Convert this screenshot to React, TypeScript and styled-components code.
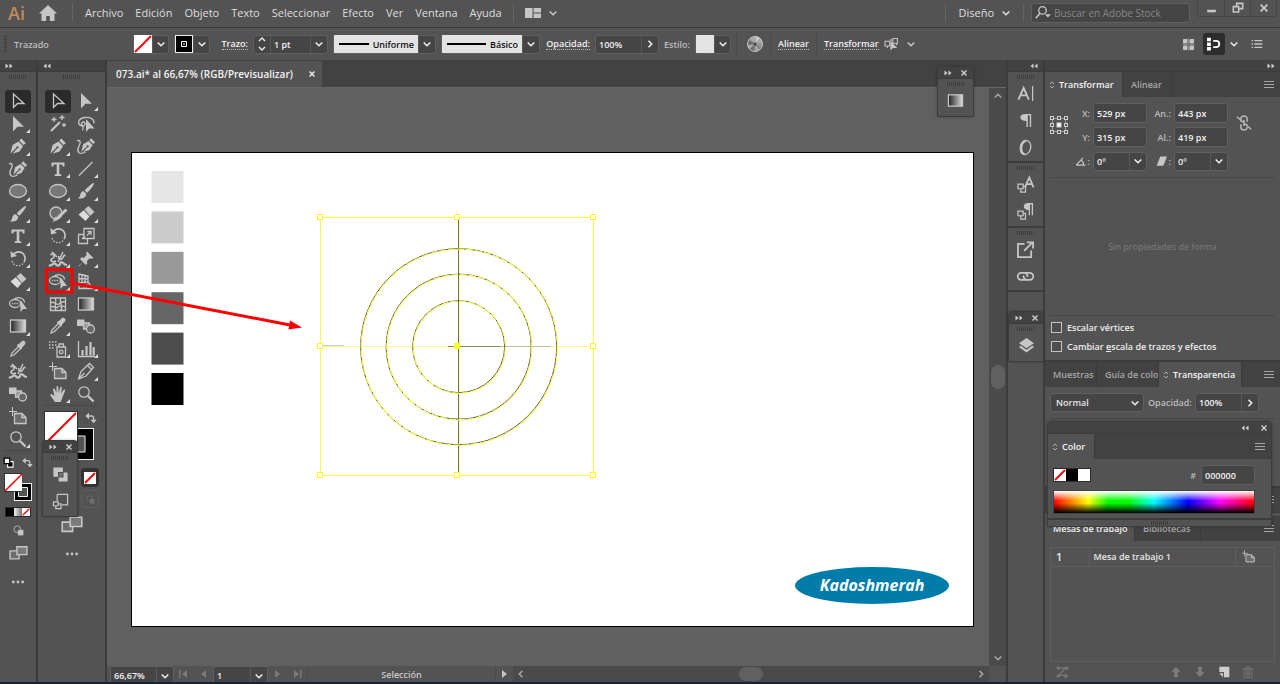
import React from 'react';
import styled, { createGlobalStyle, css } from 'styled-components';

const c = {
  bar: '#535353',
  dark: '#424242',
  line: '#3c3c3c',
  canvas: '#606060',
  field: '#454545',
  edge: '#606060',
  icon: '#c6c6c6',
  text: '#e6e6e6',
  dim: '#a6a6a6',
  off: '#7a7a7a',
};

const Global = createGlobalStyle`
  * { box-sizing: border-box; }
  body { margin: 0; background: ${c.bar}; }
  body, button, input, select, table {
    font-family: "Open Sans", "Noto Sans", sans-serif;
    font-size: 9px;
    color: ${c.text};
  }
  button { background: none; border: 0; padding: 0; cursor: default; }
  svg { display: block; flex: none; overflow: visible; }
`;

/* ---------- shell ---------- */

const Shell = styled.div`
  position: relative;
  display: flex;
  flex-direction: column;
  height: 100vh;
  overflow: hidden;
  background: ${c.bar};
`;

const Workspace = styled.div`
  flex: 1;
  min-height: 0;
  display: flex;
  background: ${c.line};
  gap: 2px;
`;

const Taskbar = styled.div`
  height: 2px;
  background: #14243a;
`;

/* ---------- menu bar ---------- */

const MenuBar = styled.header`
  display: flex;
  align-items: center;
  height: 28px;
  padding: 0 3px 2px 8px;
  border-bottom: 1px solid ${c.line};
  flex: none;
`;

const Brand = styled.span`
  width: 31px;
  font-size: 18px;
  line-height: 24px;
  font-weight: 600;
  color: #c5875f;
`;

const Divider = styled.span<{ $tall?: boolean }>`
  width: 1px;
  height: ${p => (p.$tall ? 24 : 18)}px;
  background: ${p => (p.$tall ? '#494949' : '#646464')};
  flex: none;
`;

const Menu = styled.nav`
  display: flex;
  gap: 12px;
  padding: 0 11px 0 15px;
`;

const MenuItem = styled.button`
  font-size: 11px;
  line-height: 20px;
  color: #dedede;
`;

const IconButton = styled.button<{ $w?: number; $h?: number; $on?: boolean }>`
  display: flex;
  align-items: center;
  justify-content: center;
  gap: 8px;
  width: ${p => p.$w ?? 20}px;
  height: ${p => p.$h ?? 20}px;
  flex: none;
  border-radius: 3px;
  color: ${c.icon};
  background: ${p => (p.$on ? '#2d2d2d' : 'none')};
`;

const Spacer = styled.span`
  flex: 1;
`;

const WorkspaceSwitch = styled.button`
  display: flex;
  align-items: center;
  gap: 8px;
  padding: 0 13px 0 12px;
  font-size: 11px;
  color: #dedede;
`;

const Search = styled.label`
  display: flex;
  align-items: center;
  gap: 4px;
  width: 159px;
  height: 20px;
  margin: 0 7px;
  padding-left: 3px;
  background: ${c.field};
  border: 1px solid ${c.edge};
  border-radius: 3px;
  color: ${c.icon};
`;

const SearchInput = styled.input`
  flex: 1;
  min-width: 0;
  background: none;
  border: 0;
  padding: 0;
  font-size: 10px;
  &::placeholder { color: #858585; }
`;

const WindowButtons = styled.div`
  display: flex;
  align-self: flex-start;
  border: 1px solid #454545;
  border-top: 0;
  border-radius: 0 0 3px 3px;
  & > button + button { border-left: 1px solid #454545; border-radius: 0; }
`;

/* ---------- control bar ---------- */

const ControlBar = styled.div`
  display: flex;
  align-items: center;
  gap: 5px;
  height: 32px;
  padding: 0 9px 0 4px;
  flex: none;
`;

const Context = styled.span`
  width: 116px;
  padding-left: 2px;
  font-weight: 600;
  color: #bdbdbd;
`;

const Combo = styled.div<{ $w: number; $fill?: boolean }>`
  display: flex;
  align-items: center;
  width: ${p => p.$w}px;
  height: ${p => (p.$fill ? 20 : 19)}px;
  background: ${c.field};
  border: 1px solid ${c.edge};
  border-radius: 3px;
  flex: none;
`;

const ComboInput = styled.input`
  flex: 1;
  min-width: 0;
  height: 17px;
  padding: 0 3px;
  border: 0;
  background: none;
  font-weight: 600;
  color: #f2f2f2;
`;

const ComboEnd = styled.button<{ $left?: boolean }>`
  display: flex;
  align-items: center;
  justify-content: center;
  width: 17px;
  height: 17px;
  flex: none;
  color: #eee;
  ${p => (p.$left ? 'border-right' : 'border-left')}: 1px solid #585858;
`;

const Swatch = styled.span<{ $bg?: string }>`
  width: 18px;
  height: 18px;
  flex: none;
  background: ${p => p.$bg ?? '#fff'};
`;

const LineSample = styled.button`
  display: flex;
  align-items: center;
  justify-content: flex-end;
  gap: 4px;
  flex: 1;
  height: 18px;
  padding: 0 4px 0 5px;
  background: #e3e3e3;
  color: #111;
  font-weight: 600;
  &::before { content: ''; flex: 1; height: 2px; background: #000; }
`;

const LinkLabel = styled.button<{ $w?: number }>`
  width: ${p => (p.$w ? `${p.$w}px` : 'auto')};
  display: flex;
  justify-content: flex-end;
  flex: none;
  font-weight: 600;
  color: #f0f0f0;
  & > span { line-height: 11px; border-bottom: 1px dotted #bbb; }
`;

const Label = styled.label<{ $w?: number }>`
  width: ${p => (p.$w ? `${p.$w}px` : 'auto')};
  flex: none;
  text-align: right;
  white-space: nowrap;
  font-weight: 600;
  color: #bdbdbd;
`;

const ActionGroup = styled.div`
  display: flex;
  align-items: center;
  gap: 7px;
  padding-left: 5px;
`;

/* ---------- docks ---------- */

const Dock = styled.aside<{ $w: number }>`
  display: flex;
  flex-direction: column;
  width: ${p => p.$w}px;
  flex: none;
  background: ${c.bar};
`;

const DockHead = styled.div<{ $end?: boolean }>`
  display: flex;
  align-items: center;
  justify-content: ${p => (p.$end ? 'flex-end' : 'flex-start')};
  height: 12px;
  padding: 0 5px;
  flex: none;
  background: ${c.dark};
  border-bottom: 1px solid ${c.line};
  color: #d0d0d0;
`;

const Grip = styled.span<{ $side?: boolean }>`
  flex: none;
  ${p =>
    p.$side
      ? css`
          width: 3px;
          height: 18px;
          background: repeating-linear-gradient(#3e3e3e 0 1px, transparent 1px 2px);
        `
      : css`
          width: 18px;
          height: 4px;
          margin: 3px auto 1px;
          background: repeating-linear-gradient(90deg, #3e3e3e 0 1px, transparent 1px 2px);
        `}
`;

const ToolGrid = styled.div<{ $rows: number; $cols: number; $h: number }>`
  display: grid;
  grid-template-columns: repeat(${p => p.$cols}, 28px);
  grid-template-rows: repeat(${p => p.$rows}, 1fr);
  justify-content: center;
  height: ${p => p.$h}px;
  margin-top: 10px;
  flex: none;
`;

const Tool = styled.button<{ $on?: boolean; $more?: boolean }>`
  position: relative;
  display: flex;
  align-items: center;
  justify-content: center;
  margin: 0 1px;
  border-radius: 3px;
  color: ${c.icon};
  background: ${p => (p.$on ? '#2b2b2b' : 'none')};
  ${p =>
    p.$more &&
    css`
      &::after {
        content: '';
        position: absolute;
        right: 1px;
        bottom: 2px;
        border: 2px solid transparent;
        border-right-color: #ddd;
        border-bottom-color: #ddd;
      }
    `}
`;

const Rule = styled.hr`
  width: 100%;
  border: 0;
  border-top: 1px solid #484848;
  margin: 0;
  flex: none;
`;

const ToolFoot = styled.div`
  display: flex;
  flex-direction: column;
  align-items: center;
  padding: 0 4px;
  color: ${c.icon};
`;

const FootRow = styled.div<{ $h: number }>`
  display: flex;
  align-items: center;
  justify-content: space-between;
  padding: 0 1px;
  height: ${p => p.$h}px;
  gap: 8px;
`;

const WideFoot = styled.div`
  display: flex;
  flex-direction: column;
  padding: 0 6px;
`;

const WideSwatches = styled.div`
  position: relative;
  height: 58px;
  padding-top: 5px;
`;

const SwapButton = styled.button`
  position: absolute;
  top: 6px;
  right: 2px;
  color: ${c.icon};
`;

const SideModes = styled.div`
  display: flex;
  flex-direction: column;
  align-items: flex-end;
  gap: 3px;
  padding: 4px 0 0;
`;

const ModeButton = styled(IconButton)<{ $faint?: boolean }>`
  border: 1px solid ${p => (p.$faint ? '#5e5e5e' : '#333')};
  background: ${p => (p.$faint ? 'none' : '#333')};
  color: ${p => (p.$faint ? '#707070' : c.icon)};
`;

/* ---------- document ---------- */

const Doc = styled.main`
  display: flex;
  flex-direction: column;
  flex: 1;
  min-width: 0;
  background: ${c.dark};
`;

const DocTabs = styled.div`
  height: 28px;
  display: flex;
  padding-top: 1px;
  border-bottom: 1px solid #666;
  flex: none;
`;

const DocTab = styled.button`
  display: flex;
  align-items: center;
  gap: 16px;
  padding: 0 7px 0 9px;
  background: ${c.bar};
  font-size: 10px;
  font-weight: 600;
  color: #f2f2f2;
`;

const DocRow = styled.div`
  flex: 1;
  min-height: 0;
  display: flex;
`;

const Canvas = styled.div`
  flex: 1;
  min-width: 0;
  overflow: hidden;
  padding: 64px 0 0 24px;
  background: ${c.canvas};
`;

const Artboard = styled.div`
  position: relative;
  width: 843px;
  height: 475px;
  border: 1px solid #000;
  background: #fff;
`;

const Watermark = styled.div`
  position: absolute;
  right: 24px;
  bottom: 22px;
  width: 154px;
  height: 37px;
  border-radius: 50%;
  background: #007cab;
  color: #fff;
  font-size: 16px;
  line-height: 36px;
  font-weight: 700;
  font-style: italic;
  text-align: center;
`;

const VScroll = styled.div`
  display: flex;
  flex-direction: column;
  align-items: center;
  justify-content: space-between;
  width: 17px;
  padding: 4px 0;
  flex: none;
  background: #4a4a4a;
  color: ${c.dim};
`;

const Thumb = styled.span<{ $w: number; $h: number }>`
  width: ${p => p.$w}px;
  height: ${p => p.$h}px;
  border-radius: 8px;
  background: ${c.canvas};
`;

const StatusBar = styled.footer`
  display: flex;
  height: 16px;
  padding-left: 3px;
  flex: none;
  background: ${c.bar};
`;

const StatusField = styled.div<{ $w: number }>`
  display: flex;
  width: ${p => p.$w}px;
  background: ${c.field};
  border: 1px solid ${c.edge};
  border-bottom: 0;
`;

const StatusNav = styled.div`
  display: flex;
  align-items: center;
  justify-content: space-around;
  width: 39px;
  color: ${c.off};
`;

const StatusText = styled.div`
  width: 189px;
  border-left: 1px solid #494949;
  border-right: 1px solid #494949;
  text-align: center;
  line-height: 18px;
  font-weight: 600;
  color: #c8c8c8;
`;

const HScroll = styled.div`
  display: flex;
  align-items: center;
  justify-content: space-between;
  flex: 1;
  padding: 0 4px;
  margin-right: 17px;
  background: #4a4a4a;
  color: ${c.dim};
`;

/* ---------- panels ---------- */

const IconDock = styled.div`
  display: flex;
  flex-direction: column;
  width: 35px;
  flex: none;
  background: ${c.bar};
`;

const IconGroup = styled.div<{ $h: number }>`
  display: flex;
  flex-direction: column;
  align-items: center;
  height: ${p => p.$h}px;
  border-bottom: 2px solid ${c.line};
  color: ${c.icon};
`;

const Panels = styled.div`
  display: flex;
  flex-direction: column;
  width: 235px;
  flex: none;
  background: ${c.bar};
`;

const Tabs = styled.div`
  display: flex;
  align-items: stretch;
  height: 25px;
  flex: none;
  background: ${c.dark};
`;

const Tab = styled.button<{ $on?: boolean; $icon?: boolean; $w: number }>`
  display: flex;
  align-items: center;
  gap: 4px;
  width: ${p => p.$w}px;
  padding-left: ${p => (p.$icon ? 4 : 8)}px;
  overflow: hidden;
  white-space: nowrap;
  border-right: 1px solid ${c.line};
  background: ${p => (p.$on ? c.bar : 'none')};
  font-weight: 600;
  color: ${p => (p.$on ? '#f4f4f4' : c.dim)};
`;

const PanelMenu = styled.button`
  margin-left: auto;
  padding-right: 6px;
  color: ${c.dim};
`;

const TransformBody = styled.section`
  display: flex;
  flex-direction: column;
  height: 265px;
  padding: 6px 5px 0;
  border-bottom: 2px solid ${c.line};
  flex: none;
`;

const TransformFields = styled.div`
  display: flex;
  align-items: flex-start;
  height: 74px;
`;

const RefPoint = styled.button`
  margin-top: 13px;
`;

const FieldCols = styled.div`
  display: grid;
  grid-template-columns: 22px 54px 21px 54px;
  grid-auto-rows: 20px;
  gap: 4px 3px;
  align-items: center;
`;

const FieldTail = styled.div`
  display: flex;
  justify-content: flex-end;
  align-items: center;
  gap: 2px;
  color: ${c.icon};
`;

const LinkButton = styled.button`
  margin: 12px 0 0 8px;
  color: #b8b8b8;
`;

const Empty = styled.p`
  margin: 0;
  height: 137px;
  line-height: 138px;
  text-align: center;
  color: #7c7c7c;
`;

const Check = styled.label`
  display: flex;
  align-items: center;
  gap: 5px;
  height: 19px;
  font-weight: 600;
  color: #ececec;
`;

const CheckBox = styled.input`
  appearance: none;
  width: 11px;
  height: 11px;
  margin: 0;
  border: 1px solid #c4c4c4;
  background: #4d4d4d;
`;

const Checks = styled.div`
  padding: 2px 0 0 1px;
`;

const TransparencyBody = styled.section`
  height: 101px;
  padding: 6px 5px 0;
  border-bottom: 2px solid ${c.line};
  flex: none;
`;

const BlendRow = styled.div`
  display: flex;
  align-items: center;
  gap: 4px;
  height: 25px;
  padding-bottom: 6px;
`;

const BlendBox = styled.div`
  position: relative;
  width: 94px;
  color: #eee;
  & > svg { position: absolute; right: 5px; top: 6px; pointer-events: none; }
`;

const BlendSelect = styled.select`
  appearance: none;
  width: 100%;
  height: 19px;
  padding: 0 5px;
  border: 1px solid ${c.edge};
  border-radius: 3px;
  background: ${c.field};
  font-weight: 600;
`;

const CollapsedTabs = styled(Tabs)`
  margin-bottom: 3px;
  border-bottom: 1px solid ${c.line};
`;

const BoardsBody = styled.section`
  flex: 1;
  min-height: 0;
  display: flex;
  flex-direction: column;
  padding: 6px 5px 0;
`;

const BoardFrame = styled.div`
  flex: 1;
  border: 1px solid #5e5e5e;
`;

const BoardTable = styled.table`
  width: 100%;
  border-collapse: collapse;
  table-layout: fixed;
  td {
    height: 18px;
    padding: 0 4px;
    border-bottom: 1px solid #5e5e5e;
    font-weight: 600;
  }
  td + td { border-left: 1px solid #5e5e5e; }
  td:first-child { width: 38px; padding-left: 5px; font-size: 11px; line-height: 16px; }
  td:last-child { width: 39px; padding-left: 6px; color: ${c.icon}; }
`;

const BoardTools = styled.div`
  display: flex;
  align-items: center;
  gap: 12px;
  height: 20px;
  padding: 0 21px 0 6px;
  color: ${c.off};
`;

/* ---------- floating pieces ---------- */

const Floating = styled.section`
  position: absolute;
  display: flex;
  flex-direction: column;
  background: ${c.bar};
  border: 1px solid ${c.line};
  border-radius: 4px 4px 0 0;
  box-shadow: 0 0 3px #0004;
  color: ${c.icon};
`;
const GradientFloat = styled(Floating)`
  right: 306px;
  top: 66px;
  width: 37px;
  height: 51px;
`;
const PathfinderFloat = styled(Floating)`
  left: 42px;
  top: 440px;
  width: 36px;
  height: 77px;
`;
const LayersFloat = styled(Floating)`
  right: 236px;
  top: 311px;
  width: 36px;
  height: 51px;
`;
const ColorFloat = styled(Floating)`
  right: 8px;
  top: 421px;
  width: 225px;
`;

const FloatHead = styled.div<{ $end?: boolean }>`
  display: flex;
  align-items: center;
  justify-content: ${p => (p.$end ? 'flex-end' : 'center')};
  gap: ${p => (p.$end ? 12 : 9)}px;
  height: 12px;
  padding: 0 4px;
  flex: none;
  background: ${c.dark};
  border-bottom: 1px solid ${c.line};
  color: #d0d0d0;
`;

const FloatItems = styled.div`
  display: flex;
  flex-direction: column;
  align-items: center;
`;

const ColorBody = styled.div`
  padding: 6px 16px 4px 5px;
`;

const ColorRow = styled.div`
  display: flex;
  align-items: center;
  gap: 5px;
  height: 20px;
  margin-bottom: 5px;
`;

const MiniSwatches = styled.div<{ $s: number }>`
  display: flex;
  margin-right: auto;
  border: 1px solid #2a2a2a;
  && > * {
    width: ${p => p.$s}px;
    height: ${p => p.$s}px;
  }
`;

const Spectrum = styled.div`
  height: 24px;
  border: 1px solid #444;
  background:
    linear-gradient(#fff 0%, #fff0 45%, #0000 55%, #000 100%),
    linear-gradient(90deg, #f00, #ff0 17%, #0f0 27%, #0f0 37%, #0ff 50%, #00f 67%, #f0f 83%, #f00);
`;

const ColorFoot = styled.div`
  height: 8px;
  border-top: 2px solid ${c.line};
  display: flex;
  & > span { margin: 1px auto; }
`;

const Callout = styled.svg`
  position: absolute;
  left: 44px;
  top: 266px;
  pointer-events: none;
`;

/* ---------- icons ---------- */

type IconProps = { children: React.ReactNode; s?: number };
const Stroke = ({ children, s = 18 }: IconProps) => (
  <svg width={s} height={s} viewBox="0 0 18 18" fill="none" stroke="currentColor" strokeWidth="1.3" aria-hidden="true">
    {children}
  </svg>
);

const Chevron = ({ dir = 'down' }: { dir?: 'down' | 'up' | 'left' | 'right' }) => {
  const d = {
    down: 'M.7 2.500L4 5.700l3.300-3.200',
    up: 'M.7 5.500L4 2.300l3.300 3.200',
    left: 'M5.500 .7L2.300 4l3.200 3.300',
    right: 'M2.500 .7L5.700 4 2.500 7.300',
  }[dir];
  return (
    <svg width="8" height="8" viewBox="0 0 8 8" fill="none" stroke="currentColor" strokeWidth="1.6" aria-hidden="true">
      <path d={d} />
    </svg>
  );
};

const Dbl = ({ left }: { left?: boolean }) => (
  <svg width="8" height="6" viewBox="0 0 8 6" fill="currentColor" stroke="none" aria-hidden="true">
    <path d={left ? 'M3.500 .5v5L.5 3zM7.500 .5v5l-3-2.500z' : 'M.5 .5v5l3-2.500zM4.500 .5v5l3-2.500z'} />
  </svg>
);

const Cross = ({ size = 6 }: { size?: number }) => (
  <svg width={size} height={size} viewBox="0 0 6 6" stroke="currentColor" strokeWidth="1.4" aria-hidden="true">
    <path d="M.5 .5l5 5M5.500 .5l-5 5" />
  </svg>
);

const Burger = () => (
  <svg width="10" height="8" viewBox="0 0 10 8" stroke="currentColor" aria-hidden="true">
    <path d="M0 .5h10M0 3.500h10M0 6.500h10" />
  </svg>
);

const UpDown = () => (
  <svg width="6" height="8" viewBox="0 0 6 8" fill="none" stroke="#b0b0b0" aria-hidden="true">
    <path d="M1 3l2-2 2 2M1 5l2 2 2-2" />
  </svg>
);

const NoneSwatch = ({ w = 18, h = 18 }: { w?: number; h?: number }) => (
  <svg width={w} height={h} viewBox={`0 0 ${w} ${h}`} aria-hidden="true">
    <rect width={w} height={h} fill="#fff" />
    <path d={`M1 ${h - 1}L${w - 1} 1`} stroke="#f00" strokeWidth="2" />
  </svg>
);

const pen = (
  <path
    fill="currentColor"
    stroke="none"
    d="M1.500 16.500l2-8.500 6-3.500 4.500 4.500-3.500 5.500-7 2.200 4.600-5.200a1.200 1.200 0 1 0-.8-.8zM10.300 3.700l2-2.200 4.500 4.400-2.100 2z"
  />
);

const icons: Record<string, React.ReactNode> = {
  select: <path d="M4.500 2v13.500l4-4h6.500z" />,
  direct: <path d="M4 1v15.500l4.500-4.800h6.500z" fill="currentColor" stroke="none" />,
  wand: (
    <g>
      <path d="M2 16l9-9" strokeWidth="2.200" />
      <path d="M5 2v5M2.500 4.500h5M13 0v5M10.500 2.500h5M15 8v4M13 10h4" />
    </g>
  ),
  lasso: (
    <g>
      <path d="M5.500 11C0 10 0 3.500 8 2.500c6-.5 9.500 2 9 6M5.500 11c-2.500-3 .5-5 2-3.500s0 4-2 3.500c1 1.500 1 3 0 4.500" />
      <path d="M9 4v13l3.200-3.500h5.300z" fill="currentColor" stroke="none" />
    </g>
  ),
  pen,
  curve: (
    <g>
      <g transform="translate(3 0) scale(.9)">{pen}</g>
      <path d="M0 4c3-1.500 4 1 2.500 4s-3 6 0 8c2 1 4 0 6-1" />
    </g>
  ),
  type: (
    <path d="M2.500 2.500h13v4h-1.800l-.5-2H10.300v9.500l2 .4v1.600H5.700v-1.600l2-.4V4.500H4.800l-.5 2H2.500z" fill="currentColor" stroke="none" />
  ),
  line: <path d="M2 15.500L15.500 2" />,
  ellipse: <ellipse cx="9" cy="9" rx="8.500" ry="6.500" fill="#777" />,
  brush: (
    <path
      fill="currentColor"
      stroke="none"
      d="M17 1c.9.900-4.500 8.300-7 9.700l-2.200-2.200C9.200 6 16.200.2 17 1zM6.800 9.300l2.400 2.400c.3 4-4.200 5.500-8.400 4.500 2.200-.7 2-2.500 2.600-4.200S5.300 8.800 6.800 9.300z"
    />
  ),
  shaper: (
    <g>
      <circle cx="7" cy="8" r="6" fill="#6c6c6c" />
      <path d="M7 14.500L17.500 4.500" strokeWidth="3" />
      <path d="M6.500 11.500L3.500 17l6-2.500z" fill="currentColor" stroke="none" />
    </g>
  ),
  eraser: (
    <g>
      <path d="M7.500 4.500L11.500 1l6 6-4.500 4z" fill="currentColor" stroke="none" />
      <path d="M6.800 5.200l5.700 6.300-4 4.500-7-6.500z" fill="#dcdcdc" stroke="none" />
    </g>
  ),
  rotate: (
    <g>
      <path d="M4 5a6.500 6.500 0 0 1 11.500 6" strokeWidth="1.700" />
      <path d="M15.500 11A6.500 6.500 0 0 1 3 11" strokeDasharray="1.500 1.500" />
      <path d="M1.500 1l.5 6.500L8 6z" fill="currentColor" stroke="none" />
    </g>
  ),
  scale: <path d="M7 1.500h10v10H7zM7 7.500H1.500v9h9V12M5 12l3-3M10 8.500L14 4.500M10.500 4.500H14V8" />,
  width: (
    <g>
      <path d="M3 2l5 5M1.500 5c2-2 4.500 0 3.500 2s-3 1-3 3 3 2 5 1M10 6c-1 3 1 4 3 2.500s1-4 3.500-3" strokeWidth="1.600" />
      <path d="M0 15c2 1.500 3-1 5-1.500s2 2.500 4.500 2 1-3.500 3-3.500 1.500 3 5.500 3" strokeWidth="2.200" />
      <path d="M9 12l5-10" strokeWidth="1.400" />
    </g>
  ),
  pin: (
    <path d="M10 1.500l6.500 6.500-2 .8-2-.3-2.500 2.500.2 2.800-1.400 1.200-3-3L2 16.500l-.5-.5 4.500-4-3-3 1.200-1.400 2.800.2 2.500-2.500-.3-2z" fill="currentColor" stroke="none" />
  ),
  shape: (
    <g>
      <ellipse cx="6" cy="8.500" rx="5.500" ry="4" />
      <path d="M5 4.700C7.500 1.500 15 2 15.500 7.500" />
      <path d="M3 8.500h7" strokeDasharray="1.300 1" />
      <path d="M11.500 5v12l2.700-3H18z" fill="currentColor" stroke="none" />
    </g>
  ),
  perspective: (
    <g>
      <path d="M2 2l9 2v6l-9 1zM5 2.500v8M8 3.500v7M2 6.500l9 .5M2 11v5.500h14L11 10" />
      <path d="M10 11l6 5H5z" fill="#888" stroke="none" />
    </g>
  ),
  mesh: (
    <path d="M1.500 3h15v12.500h-15zM1.500 8c4-3 5.500 3 8.500 1s3-3 6.500-2M6 3c3 4-2 7 1 12.500M12 3c-3 5 3 7 0 12.500M1.500 12c3-2 5.500 2 7.500 0s5-1 7.500 0" />
  ),
  gradient: (
    <g>
      <defs>
        <linearGradient id="toolGrad">
          <stop offset="0" stopColor="#222" />
          <stop offset="1" stopColor="#ddd" />
        </linearGradient>
      </defs>
      <rect x="1.500" y="3" width="15" height="12" fill="url(#toolGrad)" />
    </g>
  ),
  dropper: (
    <g>
      <path d="M9.500 6.500l-6.500 6.500-1 3 3-1 6.500-6.500" />
      <path d="M8.500 4.500l1.500-.5 3-3c2-1 4.500 1 3 3.500l-2.800 2.800-.4 1.700-1 .5-4-4z" fill="currentColor" stroke="none" />
    </g>
  ),
  blend: (
    <g>
      <path d="M0 2.500h7.500v6.500H0z" fill="currentColor" stroke="none" />
      <path d="M6.500 6h6v6h-6z" fill="#999" />
      <circle cx="13.500" cy="12" r="4" fill="#666" />
    </g>
  ),
  spray: (
    <g>
      <path d="M8 7h8.500v10H8zM10 7V4h4.500v3" />
      <circle cx="12.200" cy="12" r="1.800" />
      <path d="M0 2h8M0 5h8M0 8h6" strokeDasharray="1.500 1.500" />
    </g>
  ),
  graph: (
    <g>
      <path d="M1.500 1v15.500H18" />
      <path d="M5.500 15.500V10M9.500 15.500V6M13.500 15.500V2M16.700 15.500V7" strokeWidth="2.200" />
    </g>
  ),
  artboard: (
    <g>
      <path d="M5.500 6.500h7.500l4 4v6H5.500z" fill="#6c6c6c" />
      <path d="M13 6.500v4h4" />
      <path d="M3.500 0v9M0 4.500h8" strokeWidth="1" />
    </g>
  ),
  slice: <path d="M1.500 17L4 9.500 12.500 1.500l4 4-7.500 8.500zM10.500 3.500l4 4M1.500 17l6-6" />,
  hand: (
    <path
      fill="currentColor"
      stroke="none"
      d="M6 17l-4.500-6.500c-.5-1.300 1-1.800 1.800-1L5.500 11 4 4.500c-.2-1.300 1.300-1.500 1.700-.4L7.500 8V2c0-1.300 1.700-1.300 1.800 0L9.700 8l1.500-5.500c.4-1.200 1.900-.8 1.700.4L12 8.500l2.500-3.500c.8-1 2-.2 1.500 1L13.500 12c-.5 2-1 3.500-2 5z"
    />
  ),
  zoom: (
    <g>
      <circle cx="7" cy="7" r="5.200" />
      <path d="M11 11l5.500 5.500" strokeWidth="2.400" />
    </g>
  ),
  swap: (
    <g>
      <path d="M4 6h6c3 0 3 2 3 7" strokeWidth="2" />
      <path d="M6 1v10L.5 6zM8.500 11.500h9L13 17z" fill="currentColor" stroke="none" />
    </g>
  ),
  screens: (
    <g>
      <path d="M1 7.500h8.500v7.500H1z" fill="#6c6c6c" />
      <path d="M7.500 3.500H17v7.500H7.500z" fill="#7a7a7a" />
    </g>
  ),
  dots: (
    <g fill="currentColor" stroke="none">
      <circle cx="3" cy="9" r="1.800" />
      <circle cx="9" cy="9" r="1.800" />
      <circle cx="15" cy="9" r="1.800" />
    </g>
  ),
  drawMode: (
    <g>
      <circle cx="7" cy="7" r="5.500" />
      <path d="M8 8h9v9H8z" fill="currentColor" stroke="none" />
    </g>
  ),
  home: <path d="M9 1L0 9.500h2.500V17h4.700v-5h3.600v5h4.700V9.500H18z" fill="currentColor" stroke="none" />,
  layout: <path d="M0 3.500h8.500v11H0zM9.700 3.500H18v5H9.700zM9.700 9.700H18v4.800H9.700z" fill="currentColor" stroke="none" />,
  char: (
    <g>
      <path d="M1.500 15.500L7 3l5.500 12.500M3.500 11h7" strokeWidth="2" />
      <path d="M16.500 1v16" />
    </g>
  ),
  para: <path d="M15 2v14h-1.500V3.500h-2V16H10V9.500C1.500 9.500 1.500 2 9 2z" fill="currentColor" stroke="none" />,
  open: (
    <g>
      <ellipse cx="9" cy="9" rx="5.500" ry="7.500" transform="rotate(12 9 9)" />
      <path d="M9 2C3 4 3 15 8 16" strokeWidth="2.600" />
    </g>
  ),
  charStyle: (
    <g>
      <path d="M8.500 12L13 1.500 17.500 12M10 8.500h6" strokeWidth="1.900" />
      <path d="M1 8.500h5.500v5H1zM6.500 11H9v6H4v-3.500" />
    </g>
  ),
  paraStyle: (
    <g>
      <path d="M17 0v13h-1.400V1.500h-1.800V13h-1.400V7.500C5.500 7.500 5.500 0 12 0z" fill="currentColor" stroke="none" />
      <path d="M1 8.500h5.500v5H1zM6.500 11H9v6H4v-3.500" />
    </g>
  ),
  exportIcon: <path d="M8 3H1v14h14V10M7.500 10.500l9-9M10.500 1.500h6.500V8" strokeWidth="1.900" />,
  links: (
    <g strokeWidth="1.900">
      <path d="M9.500 12.500H4.500a3.700 3.700 0 0 1 0-7.400h3.500a3.700 3.700 0 0 1 3 4.500" />
      <path d="M8.500 5.100H13.500a3.700 3.700 0 0 1 0 7.400H10a3.700 3.700 0 0 1-3-4.500" />
    </g>
  ),
  layers: (
    <g fill="currentColor" stroke="none">
      <path d="M9 1l8 5.500L9 12 1 6.500z" />
      <path d="M1 10.500l2-1.300 6 4.300 6-4.300 2 1.300L9 16.500z" />
    </g>
  ),
  unlink: (
    <path
      d="M5.500 7.500V4.500a3.500 3.500 0 0 1 7 0V7.500M5.500 10.500v3a3.500 3.500 0 0 0 7 0v-3M9 5.500v7M1 2l16 14"
      strokeWidth="1.700"
    />
  ),
  unite: (
    <g>
      <path d="M1.500 1.500h10v10h-10zM7 7h9.500v9.500H7z" fill="currentColor" stroke="none" />
      <path d="M7 7h4.500v4.500H7z" fill="#777" stroke="#535353" />
    </g>
  ),
  transformEach: <path d="M5.500 1.500h11v11h-6M5.500 1.500v7M1.500 9.500h5v4h-5zM4 13v3.500h5.500v-5H7" />,
  isolate: (
    <g>
      <path d="M0 5.500h6v6H0zM10 2h6v6h-6zM6 4h4M3 11.500V14M15 8v3" />
      <path d="M7 4.500v13l3.200-3.500h5.300z" fill="currentColor" stroke="none" />
    </g>
  ),
  nodes: (
    <g>
      <path d="M2 2h5v5H2zM11 2h5v5h-5zM2 11h5v5H2zM11 11h5v5h-5z" fill="currentColor" stroke="currentColor" />
      <path d="M0 9h18M9 0v18" stroke="#8a8a8a" />
    </g>
  ),
  snap: (
    <g stroke="#fff">
      <path d="M0 1h5v4.500H0zM0 7h5v4.500H0zM0 13h5v4.500H0z" fill="#fff" stroke="none" />
      <path d="M8 5h4c5 0 5 8 0 8H8" strokeWidth="2.400" />
    </g>
  ),
  list: <path d="M1 4h2M5 4h12M1 9h2M5 9h12M1 14h2M5 14h12" strokeWidth="2" />,
  magnifier: (
    <g>
      <circle cx="9" cy="6.500" r="4.500" strokeWidth="1.600" />
      <path d="M6 10l-5 6" strokeWidth="2" />
      <path d="M12 11h7l-3.500 4z" fill="currentColor" stroke="none" />
    </g>
  ),
  minimize: <path d="M3 12.500h12" strokeWidth="3.500" />,
  restore: <path d="M2 7h8v8H2zM7 6V2h9v8h-5" strokeWidth="2.400" />,
  up: <path d="M9 1l7 8h-4v8H6V9H2z" fill="currentColor" stroke="none" />,
  down: <path d="M9 17l7-8h-4V1H6v8H2z" fill="currentColor" stroke="none" />,
  newItem: <path d="M2 1h15v16H9V9H2zM2 11h5.500v6z" fill="#cdcdcd" stroke="none" />,
  trash: <path d="M3 5h12v12H3zM1 4.500h16M6.500 4V1.500h5V4M6.500 7v8M9 7v8M11.500 7v8" />,
  arrange: (
    <g>
      <path d="M1 1h4v4H1zM13 1h4v4h-4zM1 12h4v4H1zM12 10v8l5-4z" fill="currentColor" stroke="none" />
      <path d="M5 3h8L4 13h9" strokeWidth="1.800" />
    </g>
  ),
  defaults: (
    <g>
      <path d="M7.500 7.500h9v9h-9z" fill="#000" stroke="#fff" strokeWidth="1.800" />
      <path d="M2 2h9v9H2z" fill="#fff" stroke="#000" strokeWidth="2" />
    </g>
  ),
  angle: <path d="M2 15h15M2 15L13 3M9 7c4 1 5 4 5 8" strokeWidth="2" />,
  shear: <path d="M7 1h11l-6 15H1z" fill="currentColor" stroke="none" />,
};

const Ico = ({ n, s }: { n: string; s?: number }) => <Stroke s={s}>{icons[n]}</Stroke>;

const FillStroke = ({ big }: { big?: boolean }) =>
  big ? (
    <svg width="50" height="50" viewBox="0 0 50 50" role="img" aria-label="Relleno y trazo">
      <path d="M17 17h33v32H17z" fill="#eee" />
      <path d="M18 18h31v30H18z" fill="#000" />
      <path d="M26 25h15v16H26z" fill="#535353" stroke="#eee" />
      <path d="M0 0h34v33H0z" fill="#333" />
      <path d="M1 1h32v31H1z" fill="#fff" />
      <path d="M4 30L32 2" stroke="#f00" strokeWidth="2" />
    </svg>
  ) : (
    <svg width="28" height="28" viewBox="0 0 28 28" role="img" aria-label="Relleno y trazo">
      <path d="M10 10h18v18H10z" fill="#eee" />
      <path d="M11 11h16v16H11z" fill="#000" />
      <path d="M14.500 14.500h9v9h-9z" fill="#535353" stroke="#eee" />
      <path d="M0 0h18v19H0z" fill="#333" />
      <path d="M1 1h17v17H1z" fill="#fff" />
      <path d="M1 18L18 1" stroke="#f00" strokeWidth="1.600" />
    </svg>
  );

const ColorWheel = () => (
  <svg width="16" height="16" viewBox="0 0 16 16" aria-hidden="true">
    <circle cx="8" cy="8" r="7.500" fill="#a8a8a8" stroke="#c4c4c4" />
    <path d="M8 8L7 0a8 8 0 0 1 7 3z" fill="#c8c8c8" />
    <path d="M8 8L2 4a7 7 0 0 0-1 5zM8 8l-5 5a7 7 0 0 0 4 2z" fill="#6e6e6e" />
    <path d="M8 8l7 2a7 7 0 0 1-3 4z" fill="#8a8a8a" />
    <path d="M8 1v14M1 8h14M3 3l10 10M13 3L3 13" stroke="#777" strokeWidth=".6" />
    <circle cx="8" cy="8" r="1.500" fill="#444" />
  </svg>
);

const NineGrid = () => (
  <svg width="18" height="18" viewBox="0 0 18 18" fill="none" stroke="#d0d0d0" aria-hidden="true">
    <path d="M2 2.500h14M2 15.500h14M2.500 2v14M15.500 2v14" stroke="#a0a0a0" />
    {[0, 7, 14].map(y =>
      [0, 7, 14].map(x => <rect key={`${x}-${y}`} x={x + 0.5} y={y + 0.5} width="3" height="3" fill="#535353" />),
    )}
    <rect x="7" y="7" width="4" height="4" fill="#fff" />
  </svg>
);

const Artwork = () => (
  <svg width="841" height="473" viewBox="132 153 841 473" role="img" aria-label="Círculos concéntricos seleccionados">
    {['#e6e6e6', '#cccccc', '#999999', '#666666', '#4d4d4d', '#000000'].map((fill, i) => (
      <rect key={fill} x="151.500" y={171 + i * 40.4} width="32" height="32" fill={fill} />
    ))}
    <path d="M458.500 219v255" stroke="#6c6c6c" />
    <path d="M459.500 218v257" stroke="#ffff66" strokeWidth=".5" />
    <path d="M320 346.500h274" stroke="#ffff80" />
    <path d="M322 345.500h22" stroke="#c8c8d4" />
    <path d="M448 346.500h52" stroke="#8a8a50" />
    <path d="M500 346.500h51" stroke="#bcbc94" />
    <g fill="none">
      {[98, 72.5, 46].map(r => (
        <g key={r}>
          <circle cx="458.700" cy="346.700" r={r} stroke="#3a3a3a" strokeWidth=".9" />
          <circle cx="459.300" cy="347.200" r={r} stroke="#ffff40" strokeWidth="1.200" strokeDasharray="7 2" />
        </g>
      ))}
      <rect x="320.500" y="217.500" width="273" height="258" stroke="#ffff40" />
    </g>
    <g stroke="#ffff20">
      {[217, 346, 475].map(y =>
        [320, 457, 593].map(x => (
          <rect
            key={`${x}-${y}`}
            x={x - 2.5}
            y={y - 2.5}
            width="5"
            height="5"
            fill={x === 457 && y === 346 ? '#ffff20' : '#fff'}
          />
        )),
      )}
    </g>
  </svg>
);

/* ---------- composition ---------- */

type ToolDef = [icon: string, label: string, more?: boolean];

const narrowTools: ToolDef[] = [
  ['select', 'Selección'],
  ['direct', 'Selección directa', true],
  ['pen', 'Pluma', true],
  ['curve', 'Curvatura'],
  ['ellipse', 'Elipse', true],
  ['brush', 'Pincel', true],
  ['type', 'Texto', true],
  ['rotate', 'Rotar', true],
  ['eraser', 'Borrador', true],
  ['shape', 'Creador de formas'],
  ['gradient', 'Degradado', true],
  ['dropper', 'Cuentagotas'],
  ['width', 'Anchura'],
  ['blend', 'Fusión'],
  ['artboard', 'Mesa de trabajo'],
  ['zoom', 'Zoom', true],
];

const wideTools: ToolDef[] = [
  ['select', 'Selección'],
  ['direct', 'Selección directa', true],
  ['wand', 'Varita mágica'],
  ['lasso', 'Lazo'],
  ['pen', 'Pluma', true],
  ['curve', 'Curvatura'],
  ['type', 'Texto', true],
  ['line', 'Segmento de línea', true],
  ['ellipse', 'Elipse', true],
  ['brush', 'Pincel', true],
  ['shaper', 'Shaper', true],
  ['eraser', 'Borrador', true],
  ['rotate', 'Rotar', true],
  ['scale', 'Escala', true],
  ['width', 'Anchura', true],
  ['pin', 'Posición libre', true],
  ['shape', 'Creador de formas', true],
  ['perspective', 'Perspectiva', true],
  ['mesh', 'Malla'],
  ['gradient', 'Degradado'],
  ['dropper', 'Cuentagotas', true],
  ['blend', 'Fusión'],
  ['spray', 'Rociar símbolo', true],
  ['graph', 'Gráfica', true],
  ['artboard', 'Mesa de trabajo'],
  ['slice', 'Sector', true],
  ['hand', 'Mano', true],
  ['zoom', 'Zoom'],
];

const ToolSet = ({ tools, cols, h }: { tools: ToolDef[]; cols: number; h: number }) => (
  <ToolGrid $rows={tools.length / cols} $cols={cols} $h={h}>
    {tools.map(([icon, label, more], i) => (
      <Tool key={label} aria-label={label} $on={i === 0} $more={more}>
        <Ico n={icon} s={18} />
      </Tool>
    ))}
  </ToolGrid>
);

const FieldBox = ({ id, value, w, end }: { id: string; value: string; w: number; end?: 'down' | 'right' }) => (
  <Combo $w={w} $fill={!end}>
    <ComboInput id={id} defaultValue={value} />
    {end && (
      <ComboEnd aria-label="Opciones">
        <Chevron dir={end} />
      </ComboEnd>
    )}
  </Combo>
);

const DropEnd = () => (
  <ComboEnd aria-label="Abrir lista">
    <Chevron />
  </ComboEnd>
);

const menus = ['Archivo', 'Edición', 'Objeto', 'Texto', 'Seleccionar', 'Efecto', 'Ver', 'Ventana', 'Ayuda'];

function TopMenu() {
  return (
    <MenuBar>
      <Brand>Ai</Brand>
      <IconButton aria-label="Inicio" $w={18}>
        <Ico n="home" />
      </IconButton>
      <Menu aria-label="Menú principal">
        <Divider />
        {menus.map(m => (
          <MenuItem key={m}>{m}</MenuItem>
        ))}
      </Menu>
      <Divider />
      <IconButton aria-label="Organizar documentos" $w={54}>
        <Ico n="layout" s={16} />
        <Chevron />
      </IconButton>
      <Spacer />
      <Divider />
      <WorkspaceSwitch>
        Diseño <Chevron />
      </WorkspaceSwitch>
      <Divider />
      <Search>
        <Ico n="magnifier" s={15} />
        <SearchInput aria-label="Buscar" placeholder="Buscar en Adobe Stock" />
      </Search>
      <WindowButtons>
        <IconButton aria-label="Minimizar" $w={26} $h={16}>
          <Ico n="minimize" s={13} />
        </IconButton>
        <IconButton aria-label="Restaurar" $w={26} $h={16}>
          <Ico n="restore" s={12} />
        </IconButton>
        <IconButton aria-label="Cerrar" $w={26} $h={16}>
          <Cross size={8} />
        </IconButton>
      </WindowButtons>
    </MenuBar>
  );
}

function Controls() {
  return (
    <ControlBar>
      <Grip $side />
      <Context>Trazado</Context>
      <Combo $w={36}>
        <NoneSwatch />
        <DropEnd />
      </Combo>
      <Combo $w={36}>
        <svg width="18" height="18" viewBox="0 0 18 18" fill="none" aria-hidden="true">
          <path d="M0 0h18v18H0z" fill="#eee" />
          <path d="M1 1h16v16H1z" fill="#000" />
          <path d="M6.500 6.500h5v5h-5zM8 9h2" stroke="#fff" />
        </svg>
        <DropEnd />
      </Combo>
      <LinkLabel $w={33}>
        <span>Trazo:</span>
      </LinkLabel>
      <Combo $w={75}>
        <ComboEnd $left aria-label="Cambiar grosor">
          <svg width="8" height="14" viewBox="0 0 8 14" fill="none" stroke="currentColor" strokeWidth="1.4">
            <path d="M1 4l3-3 3 3M1 10l3 3 3-3" />
          </svg>
        </ComboEnd>
        <ComboInput aria-label="Grosor del trazo" defaultValue="1 pt" />
        <DropEnd />
      </Combo>
      <Combo $w={103}>
        <LineSample>Uniforme</LineSample>
        <DropEnd />
      </Combo>
      <Combo $w={99}>
        <LineSample>Básico</LineSample>
        <DropEnd />
      </Combo>
      <LinkLabel $w={45}>
        <span>Opacidad:</span>
      </LinkLabel>
      <Combo $w={64}>
        <ComboInput aria-label="Opacidad" defaultValue="100%" />
        <ComboEnd aria-label="Ajustar opacidad">
          <Chevron dir="right" />
        </ComboEnd>
      </Combo>
      <Label as="span" $w={26}>
        Estilo:
      </Label>
      <Combo $w={36}>
        <Swatch $bg="#e3e3e3" />
        <DropEnd />
      </Combo>
      <Divider $tall />
      <ActionGroup>
        <IconButton aria-label="Volver a colorear" $w={16}>
          <ColorWheel />
        </IconButton>
        <Divider $tall />
        <LinkLabel>
          <span>Alinear</span>
        </LinkLabel>
        <Divider $tall />
        <LinkLabel>
          <span>Transformar</span>
        </LinkLabel>
        <IconButton aria-label="Aislar" $w={28}>
          <Ico n="isolate" s={14} />
          <Chevron />
        </IconButton>
      </ActionGroup>
      <Spacer />
      <IconButton aria-label="Píxeles">
        <Ico n="nodes" s={13} />
      </IconButton>
      <IconButton aria-label="Ajustar" $w={22} $h={22} $on>
        <Ico n="snap" s={14} />
      </IconButton>
      <Chevron />
      <IconButton aria-label="Lista" $w={28}>
        <Ico n="list" s={12} />
      </IconButton>
    </ControlBar>
  );
}

function NarrowToolbar() {
  return (
    <Dock $w={36}>
      <DockHead>
        <Dbl />
      </DockHead>
      <Grip />
      <ToolSet tools={narrowTools} cols={1} h={360} />
      <ToolFoot>
        <Rule />
        <FootRow $h={22}>
          <Ico n="defaults" s={11} />
          <Ico n="swap" s={11} />
        </FootRow>
        <FillStroke />
        <FootRow $h={22}>
          <MiniSwatches $s={8}>
            <Swatch $bg="#000" />
            <Swatch $bg="linear-gradient(90deg,#eee,#777)" />
            <NoneSwatch w={12} h={12} />
          </MiniSwatches>
        </FootRow>
        <FootRow $h={14}>
          <Ico n="drawMode" s={11} />
        </FootRow>
        <FootRow $h={30}>
          <Ico n="screens" s={19} />
        </FootRow>
        <FootRow $h={30}>
          <Ico n="dots" s={14} />
        </FootRow>
      </ToolFoot>
    </Dock>
  );
}

function WideToolbar() {
  return (
    <Dock $w={67}>
      <DockHead>
        <Dbl left />
      </DockHead>
      <Grip />
      <ToolSet tools={wideTools} cols={2} h={315} />
      <WideFoot>
        <Rule />
        <WideSwatches>
          <FillStroke big />
          <SwapButton aria-label="Intercambiar relleno y trazo">
            <Ico n="swap" s={12} />
          </SwapButton>
        </WideSwatches>
        <SideModes>
          <ModeButton aria-label="Ninguno" $w={18} $h={19}>
            <NoneSwatch w={12} h={12} />
          </ModeButton>
          <ModeButton aria-label="Modo de dibujo" $w={18} $h={18} $faint>
            <Ico n="drawMode" s={9} />
          </ModeButton>
        </SideModes>
      </WideFoot>
      <ToolFoot>
        <FootRow $h={32}>
          <Ico n="screens" s={22} />
        </FootRow>
        <FootRow $h={28}>
          <Ico n="dots" s={14} />
        </FootRow>
      </ToolFoot>
    </Dock>
  );
}

const NavArrow = ({ d }: { d: string }) => (
  <svg width="9" height="8" viewBox="0 0 9 8" fill="currentColor" aria-hidden="true">
    <path d={d} />
  </svg>
);

function Document() {
  return (
    <Doc>
      <DocTabs>
        <DocTab>
          073.ai* al 66,67% (RGB/Previsualizar) <Cross />
        </DocTab>
      </DocTabs>
      <DocRow>
        <Canvas>
          <Artboard>
            <Artwork />
            <Watermark>Kadoshmerah</Watermark>
          </Artboard>
        </Canvas>
        <VScroll>
          <Chevron dir="up" />
          <Thumb $w={14} $h={24} />
          <Chevron />
        </VScroll>
      </DocRow>
      <StatusBar>
        <StatusField $w={64}>
          <ComboInput aria-label="Nivel de zoom" defaultValue="66,67%" />
          <DropEnd />
        </StatusField>
        <StatusNav>
          <NavArrow d="M0 0h1.500v8H0zM8 0v8L3 4z" />
          <NavArrow d="M7 0v8L2 4z" />
        </StatusNav>
        <StatusField $w={55}>
          <ComboInput aria-label="Mesa de trabajo" defaultValue="1" />
          <DropEnd />
        </StatusField>
        <StatusNav>
          <NavArrow d="M2 0v8l5-4z" />
          <NavArrow d="M1 0v8l5-4zM7 0h1.500v8H7z" />
        </StatusNav>
        <StatusText>Selección</StatusText>
        <IconButton aria-label="Mostrar" $w={17} $h={16}>
          <NavArrow d="M2 0v8l5-4z" />
        </IconButton>
        <HScroll>
          <Chevron dir="left" />
          <Thumb $w={24} $h={14} />
          <Chevron dir="right" />
        </HScroll>
      </StatusBar>
    </Doc>
  );
}

const DockIcon = ({ n, label }: { n: string; label: string }) => (
  <IconButton aria-label={label} $w={26} $h={27}>
    <Ico n={n} s={17} />
  </IconButton>
);

function CollapsedDock() {
  return (
    <IconDock>
      <DockHead $end>
        <Dbl left />
      </DockHead>
      <IconGroup $h={91}>
        <Grip />
        <DockIcon n="char" label="Carácter" />
        <DockIcon n="para" label="Párrafo" />
        <DockIcon n="open" label="OpenType" />
      </IconGroup>
      <IconGroup $h={65}>
        <Grip />
        <DockIcon n="charStyle" label="Estilos de carácter" />
        <DockIcon n="paraStyle" label="Estilos de párrafo" />
      </IconGroup>
      <IconGroup $h={64}>
        <Grip />
        <DockIcon n="exportIcon" label="Exportar" />
        <DockIcon n="links" label="Vínculos" />
      </IconGroup>
    </IconDock>
  );
}

const MenuKey = () => (
  <PanelMenu aria-label="Menú del panel">
    <Burger />
  </PanelMenu>
);

function RightPanels() {
  return (
    <Panels>
      <DockHead $end>
        <Dbl />
      </DockHead>
      <Tabs>
        <Tab $on $icon $w={78}>
          <UpDown /> Transformar
        </Tab>
        <Tab $w={49}>Alinear</Tab>
        <MenuKey />
      </Tabs>
      <TransformBody>
        <TransformFields>
          <RefPoint aria-label="Punto de referencia">
            <NineGrid />
          </RefPoint>
          <FieldCols>
            <Label htmlFor="tx">X:</Label>
            <FieldBox id="tx" value="529 px" w={54} />
            <Label htmlFor="tw">An.:</Label>
            <FieldBox id="tw" value="443 px" w={54} />
            <Label htmlFor="ty">Y:</Label>
            <FieldBox id="ty" value="315 px" w={54} />
            <Label htmlFor="th">Al.:</Label>
            <FieldBox id="th" value="419 px" w={54} />
            <FieldTail>
              <Ico n="angle" s={11} />
              <Label htmlFor="ta">:</Label>
            </FieldTail>
            <FieldBox id="ta" value="0º" w={54} end="down" />
            <FieldTail>
              <Ico n="shear" s={11} />
              <Label htmlFor="ts">:</Label>
            </FieldTail>
            <FieldBox id="ts" value="0º" w={54} end="down" />
          </FieldCols>
          <LinkButton aria-label="Restringir proporciones">
            <Ico n="unlink" s={16} />
          </LinkButton>
        </TransformFields>
        <Rule />
        <Empty>Sin propiedades de forma</Empty>
        <Rule />
        <Checks>
          <Check>
            <CheckBox type="checkbox" /> Escalar vértices
          </Check>
          <Check>
            <CheckBox type="checkbox" />
            <span>
              Cambiar <u>e</u>scala de trazos y efectos
            </span>
          </Check>
        </Checks>
      </TransformBody>
      <Tabs>
        <Tab $w={52}>Muestras</Tab>
        <Tab $w={62}>Guía de colo</Tab>
        <Tab $on $icon $w={83}>
          <UpDown /> Transparencia
        </Tab>
        <MenuKey />
      </Tabs>
      <TransparencyBody>
        <BlendRow>
          <BlendBox>
            <BlendSelect aria-label="Modo de fusión">
              <option>Normal</option>
            </BlendSelect>
            <Chevron />
          </BlendBox>
          <Label htmlFor="op" $w={43}>
            Opacidad:
          </Label>
          <FieldBox id="op" value="100%" w={64} end="right" />
        </BlendRow>
        <Rule />
      </TransparencyBody>
      <CollapsedTabs>
        <MenuKey />
      </CollapsedTabs>
      <Tabs>
        <Tab $on $w={90}>
          Mesas de trabajo
        </Tab>
        <Tab $w={66}>Bibliotecas</Tab>
        <MenuKey />
      </Tabs>
      <BoardsBody>
        <BoardFrame>
          <BoardTable>
            <tbody>
              <tr>
                <td>1</td>
                <td>Mesa de trabajo 1</td>
                <td>
                  <Ico n="artboard" s={13} />
                </td>
              </tr>
            </tbody>
          </BoardTable>
        </BoardFrame>
        <BoardTools>
          <Ico n="arrange" s={13} />
          <Spacer />
          <Ico n="up" s={12} />
          <Ico n="down" s={12} />
          <Ico n="newItem" s={12} />
          <Ico n="trash" s={12} />
        </BoardTools>
      </BoardsBody>
    </Panels>
  );
}

export default function App() {
  return (
    <Shell>
      <Global />
      <TopMenu />
      <Controls />
      <Workspace>
        <NarrowToolbar />
        <WideToolbar />
        <Document />
        <CollapsedDock />
        <RightPanels />
      </Workspace>
      <Taskbar />

      <GradientFloat aria-label="Degradado">
        <FloatHead>
          <Dbl />
          <Cross />
        </FloatHead>
        <Grip />
        <FloatItems>
          <DockIcon n="gradient" label="Degradado" />
        </FloatItems>
      </GradientFloat>

      <PathfinderFloat aria-label="Buscatrazos">
        <FloatHead>
          <Dbl />
          <Cross />
        </FloatHead>
        <Grip />
        <FloatItems>
          <DockIcon n="unite" label="Buscatrazos" />
          <DockIcon n="transformEach" label="Transformar" />
        </FloatItems>
      </PathfinderFloat>

      <LayersFloat aria-label="Capas">
        <FloatHead>
          <Dbl />
          <Cross />
        </FloatHead>
        <Grip />
        <FloatItems>
          <DockIcon n="layers" label="Capas" />
        </FloatItems>
      </LayersFloat>

      <ColorFloat aria-label="Color">
        <FloatHead $end>
          <Dbl left />
          <Cross />
        </FloatHead>
        <Tabs>
          <Tab $on $icon $w={47}>
            <UpDown /> Color
          </Tab>
          <MenuKey />
        </Tabs>
        <ColorBody>
          <ColorRow>
            <MiniSwatches $s={12}>
              <NoneSwatch w={12} h={12} />
              <Swatch $bg="#000" />
              <Swatch />
            </MiniSwatches>
            <Label htmlFor="hex">#</Label>
            <FieldBox id="hex" value="000000" w={54} />
          </ColorRow>
          <Spectrum />
        </ColorBody>
        <ColorFoot>
          <Grip />
        </ColorFoot>
      </ColorFloat>

      <Callout width="262" height="66" viewBox="0 0 262 66" fill="none" aria-hidden="true">
        <path d="M2.500 3.500h25.500v22.500H2.500z" stroke="#f00" strokeWidth="3" />
        <path d="M28 17l218 42" stroke="#f00" strokeWidth="3" />
        <path d="M246 54.500L258 61.500l-13.500 2z" fill="#f00" />
      </Callout>
    </Shell>
  );
}
